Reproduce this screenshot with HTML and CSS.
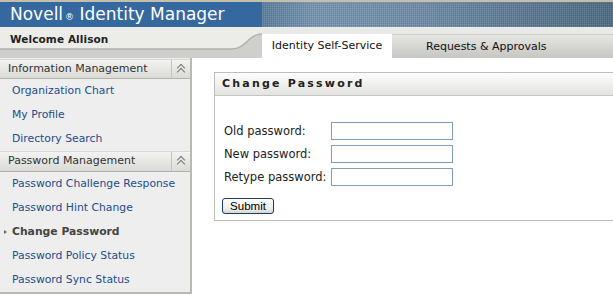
FILE: index.html
```html
<!DOCTYPE html>
<html>
<head>
<meta charset="utf-8">
<link rel="stylesheet" href="styles.css">
</head>
<body>
<div class="topstrip"></div>
<header class="banner">
  <div class="brand">Novell<span class="reg">®</span> Identity Manager</div>
  <div class="texture"></div>
</header>
<nav class="navbar">
  <div class="welcome">
    <svg class="curve" width="262" height="31" viewBox="0 0 262 31">
      <path d="M0 22 H232 C246 22 248 7 262 7 V31 H0 Z" fill="#cfcfcb"/>
      <path d="M0 22 H232 C246 22 248 7 262 7" fill="none" stroke="#b2b2ae" stroke-width="1.5"/>
    </svg>
    <span class="welcome-text">Welcome Allison</span>
  </div>
  <div class="tabs">
    <div class="tab active">Identity Self-Service</div>
    <div class="tab">Requests &amp; Approvals</div>
  </div>
</nav>
<div class="page">
  <aside class="sidebar">
    <div class="sec-head"><span class="sec-title">Information Management</span><span class="collapse"></span></div>
    <ul class="links">
      <li><a>Organization Chart</a></li>
      <li><a>My Profile</a></li>
      <li><a>Directory Search</a></li>
    </ul>
    <div class="sec-head"><span class="sec-title">Password Management</span><span class="collapse"></span></div>
    <ul class="links">
      <li><a>Password Challenge Response</a></li>
      <li><a>Password Hint Change</a></li>
      <li class="current"><span class="bullet"></span>Change Password</li>
      <li><a>Password Policy Status</a></li>
      <li><a>Password Sync Status</a></li>
    </ul>
  </aside>
  <main class="main">
    <section class="panel">
      <div class="panel-head">Change Password</div>
      <form class="form">
        <div class="grid">
          <label>Old password:</label><input type="password">
          <label>New password:</label><input type="password">
          <label>Retype password:</label><input type="password">
        </div>
        <button type="button" class="submit">Submit</button>
      </form>
    </section>
  </main>
</div>
</body>
</html>
```

FILE: styles.css
```css
* { box-sizing: border-box; }
html, body { margin: 0; padding: 0; }
body {
  width: 613px;
  height: 295px;
  overflow: hidden;
  background: #fff;
  font-family: "DejaVu Sans", Verdana, sans-serif;
  color: #222;
}
.topstrip { height: 2px; background: #c4bfad; }
.banner { height: 25px; display: flex; }
.brand {
  width: 262px;
  background: #35689e;
  color: #fff;
  font-size: 17px;
  line-height: 25px;
  padding-left: 10px;
  white-space: nowrap;
}
.brand .reg { font-size: 9px; margin-left: 2px; }
.texture {
  flex: 1;
  background:
    repeating-linear-gradient(90deg, rgba(255,255,255,0.06) 0 1px, rgba(0,0,0,0.05) 1px 2px),
    repeating-linear-gradient(0deg, rgba(255,255,255,0.05) 0 1px, rgba(0,0,0,0.06) 1px 2px),
    linear-gradient(90deg, #5c7f9e 0%, #7897b3 15%, #6f8ea9 45%, #5b7a94 75%, #4d6c84 100%);
}
.navbar {
  height: 31px;
  display: flex;
  background: linear-gradient(#eaeae8, #e2e2e0);
}
.welcome {
  position: relative;
  width: 262px;
  height: 31px;
  background: #ecece9;
}
.curve { position: absolute; left: 0; top: 0; }
.welcome-text {
  position: relative;
  display: block;
  padding: 6px 0 0 10px;
  font-size: 10.5px;
  font-weight: bold;
  color: #222;
  letter-spacing: 0.1px;
}
.tabs { flex: 1; display: flex; align-items: flex-end; }
.tab {
  height: 24px;
  line-height: 23px;
  font-size: 11px;
  color: #111;
  white-space: nowrap;
}
.tab.active { width: 130px; background: #fff; text-align: center; }
.tab:not(.active) {
  flex: 1;
  padding-left: 34px;
  background: linear-gradient(#e6e6e3, #d2d2ce 60%, #c6c6c2);
  border-top: 1px solid #cfcfcc;
}
.page { display: flex; align-items: flex-start; }
.sidebar {
  width: 192px;
  background: #eeeeee;
  border-right: 2px solid #b9b9b2;
  border-bottom: 2px solid #b9b9b2;
  padding-top: 1px;
}
.sec-head {
  display: flex;
  height: 20px;
  background: linear-gradient(#f3f3f1, #dadad6);
  border-bottom: 1px solid #b3b3ab;
  border-top: 1px solid #d8d8d4;
}
.links + .sec-head { height: 21px; }
.sec-title {
  flex: 1;
  font-size: 11px;
  line-height: 18px;
  padding-left: 8px;
  color: #333;
}
.collapse {
  width: 19px;
  border-left: 1px solid #c4c4bc;
  position: relative;
}
.collapse::before, .collapse::after {
  content: "";
  position: absolute;
  left: 6px;
  width: 5px; height: 5px;
  border-left: 1px solid #777;
  border-top: 1px solid #777;
  transform: rotate(45deg);
}
.collapse::before { top: 5px; }
.collapse::after { top: 9px; }
.links { list-style: none; margin: 0; padding: 0; }
.links li {
  height: 24px;
  line-height: 24px;
  font-size: 10.8px;
  padding-left: 12px;
  white-space: nowrap;
}
.links a { color: #1d4c8c; }
.links li.current { font-weight: bold; color: #444; position: relative; }
.bullet {
  position: absolute;
  left: 4px; top: 10px;
  width: 0; height: 0;
  border-left: 3px solid #666;
  border-top: 2px solid transparent;
  border-bottom: 2px solid transparent;
}
.main { flex: 1; padding: 14px 0 0 22px; margin-right: -20px; }
.panel { border: 1px solid #bdbdbd; }
.panel-head {
  height: 23px;
  line-height: 21px;
  background: linear-gradient(#fdfdfd, #e3e3e1);
  border-bottom: 1px solid #c6c6c4;
  font-size: 11px;
  font-weight: bold;
  letter-spacing: 2.2px;
  padding-left: 7px;
  color: #222;
}
.form { padding: 26px 0 6px 9px; }
.grid {
  display: grid;
  grid-template-columns: 107px 122px;
  row-gap: 5px;
  align-items: center;
}
.grid label { font-size: 11.5px; color: #222; white-space: nowrap; }
.grid input {
  width: 122px;
  height: 18px;
  border: 1px solid #7f9db9;
  background: #fff;
  padding: 0;
  margin: 0;
}
.submit {
  display: block;
  margin-top: 12px;
  margin-left: -2px;
  width: 52px;
  height: 16px;
  padding: 0;
  border: 1px solid #1e3a66;
  border-radius: 3px;
  background: linear-gradient(#ffffff, #ececea 70%, #d6d6d2);
  font-family: "Liberation Sans", Arial, sans-serif;
  font-size: 11.5px;
  line-height: 14px;
  color: #000;
}
```
